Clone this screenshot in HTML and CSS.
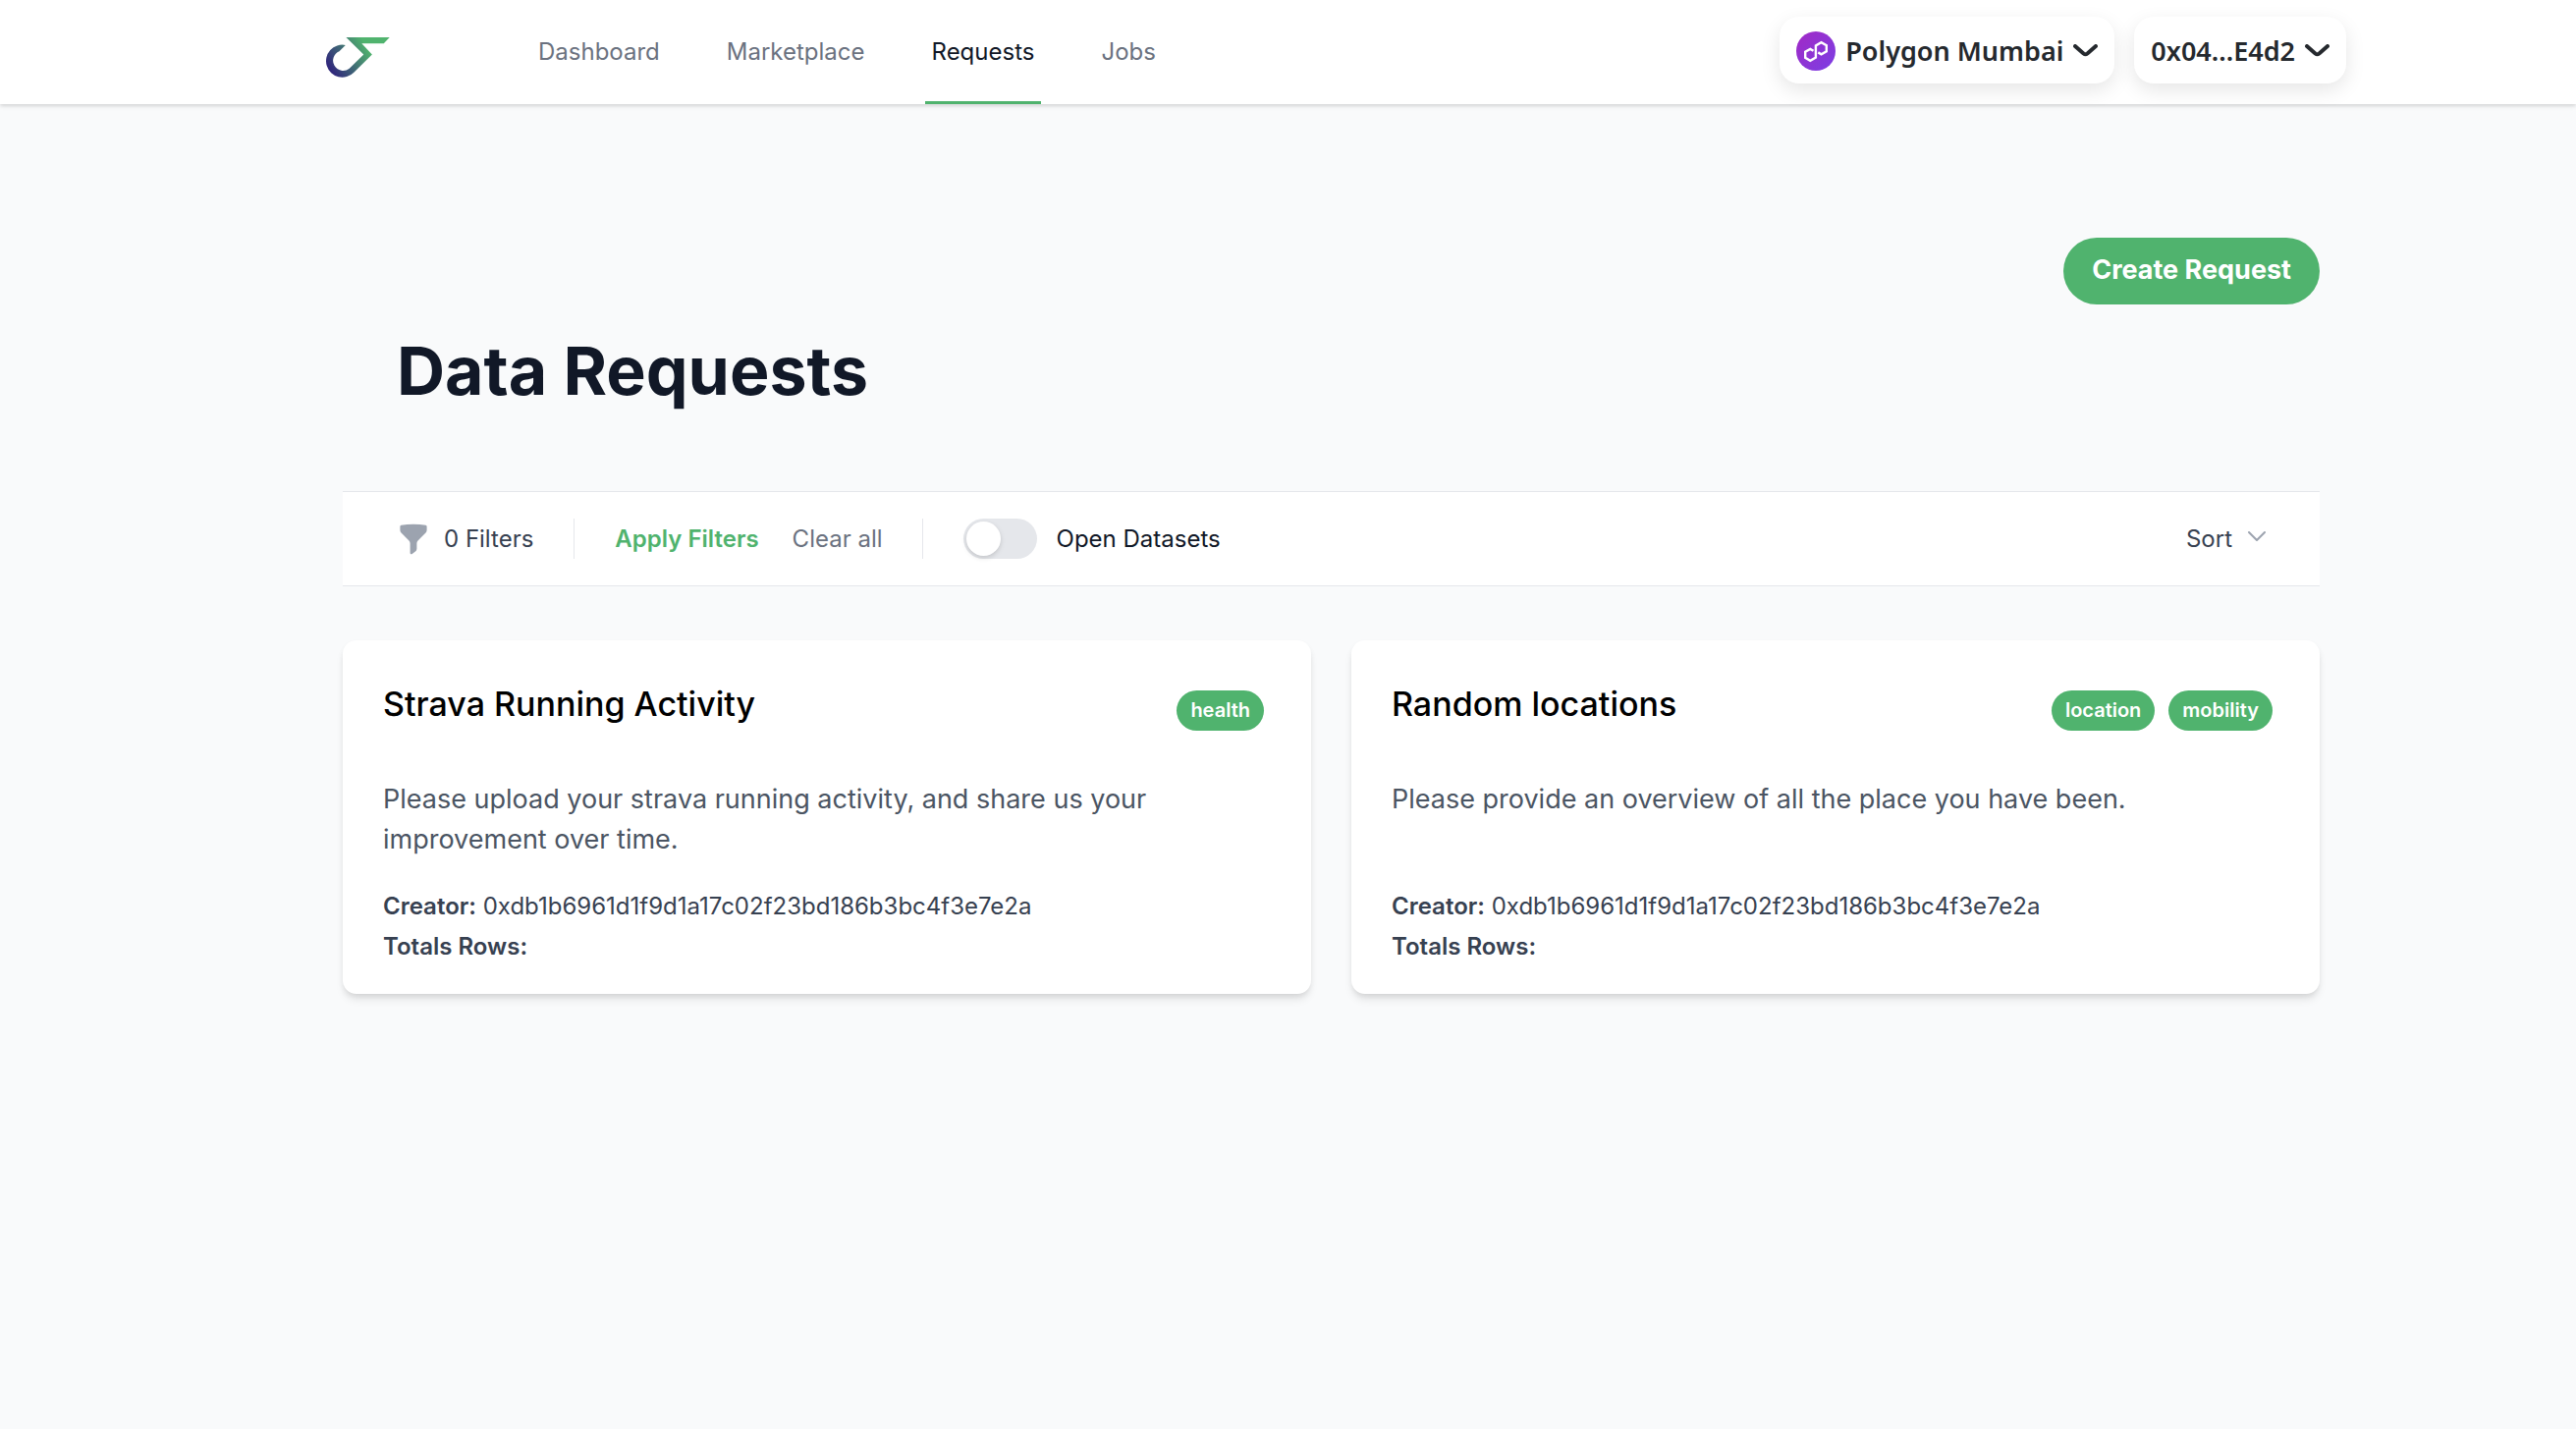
FILE: index.html
```html
<!DOCTYPE html>
<html lang="en">
<head>
  <meta charset="UTF-8">
  <meta name="viewport" content="width=device-width, initial-scale=1">
  <title>Data Requests</title>
  <link rel="stylesheet" href="styles.css">
</head>
<body>
  <header class="header">
    <div class="header-inner">
      <a class="logo" href="#" aria-label="Home">
        <svg viewBox="66 54 195 124" width="65" height="41">
          <defs>
            <linearGradient id="logo-fill" gradientUnits="userSpaceOnUse" x1="80" y1="150" x2="190" y2="80">
              <stop offset="0" stop-color="#312a7c"/>
              <stop offset="1" stop-color="#50b36e"/>
            </linearGradient>
          </defs>
          <path fill="url(#logo-fill)" d="M127 54H261L243 73H175L207 107L151 162A50 50 0 1 1 125 78L106 97A31 31 0 1 0 137 150L181 107Z"/>
        </svg>
      </a>
      <nav class="nav">
        <a href="#">Dashboard</a>
        <a href="#">Marketplace</a>
        <a href="#" class="active">Requests</a>
        <a href="#">Jobs</a>
      </nav>
      <div class="wallet">
        <button class="wallet-button" type="button">
          <svg viewBox="0 0 40 40" width="40" height="40">
            <defs>
              <linearGradient id="polygon-fill" x1="0" y1="0" x2="1" y2="1">
                <stop offset="0" stop-color="#a229c5"/>
                <stop offset="1" stop-color="#7b3fe4"/>
              </linearGradient>
            </defs>
            <circle cx="20" cy="20" r="20" fill="url(#polygon-fill)"/>
            <path fill="none" stroke="#fff" stroke-width="2.4" d="M17.500 19.800L14.300 17.900L9.200 20.800V26.800L14.300 29.800L19.900 26.600V14.400L25.500 11.200L30.800 14.200V20.300L25.500 23.300L22.300 21.400"/>
          </svg>
          Polygon Mumbai
          <svg class="caret" viewBox="0 0 25 13" width="25" height="13"><path d="M2 2L10.500 9.500Q12.500 11 14.500 9.500L23 2"/></svg>
        </button>
        <button class="wallet-button" type="button">
          0x04...E4d2
          <svg class="caret" viewBox="0 0 25 13" width="25" height="13"><path d="M2 2L10.500 9.500Q12.500 11 14.500 9.500L23 2"/></svg>
        </button>
      </div>
    </div>
  </header>

  <main class="page">
    <div class="page-actions">
      <button class="create-button" type="button">Create Request</button>
    </div>
    <h1>Data Requests</h1>

    <!-- Filters -->
    <section class="filters" aria-label="Filters">
      <button class="filter-count" type="button">
        <svg viewBox="0 0 20 20" width="34" height="34"><path fill="#9ca3af" fill-rule="evenodd" d="M2.628 1.601C5.028 1.206 7.490 1 10 1s4.973.206 7.372.601a.75.75 0 01.628.740v2.288a2.250 2.250 0 01-.659 1.590l-4.682 4.683a2.250 2.250 0 00-.659 1.590v3.037c0 .684-.310 1.330-.844 1.757l-1.937 1.550A.75.75 0 018 18.250v-5.757a2.250 2.250 0 00-.659-1.591L2.659 6.220A2.250 2.250 0 012 4.629V2.340a.75.75 0 01.628-.740z"/></svg>
        0 Filters
      </button>
      <div class="filter-group">
        <button class="apply" type="button">Apply Filters</button>
        <button class="clear" type="button">Clear all</button>
      </div>
      <div class="filter-group">
        <label class="switch"><input type="checkbox" role="switch">Open Datasets</label>
      </div>
      <button class="sort" type="button">
        Sort
        <svg viewBox="0 0 18 11" width="18" height="11"><path d="M1 1L9 9L17 1"/></svg>
      </button>
    </section>

    <!-- Requests -->
    <section class="cards" aria-label="Requests">
      <article class="card">
        <div class="card-head">
          <h2>Strava Running Activity</h2>
          <div class="tags"><span class="tag">health</span></div>
        </div>
        <p class="description">Please upload your strava running activity, and share us your improvement over time.</p>
        <p class="meta"><b>Creator:</b> 0xdb1b6961d1f9d1a17c02f23bd186b3bc4f3e7e2a</p>
        <p class="meta"><b>Totals Rows:</b></p>
      </article>
      <article class="card">
        <div class="card-head">
          <h2>Random locations</h2>
          <div class="tags"><span class="tag">location</span><span class="tag">mobility</span></div>
        </div>
        <p class="description">Please provide an overview of all the place you have been.</p>
        <p class="meta"><b>Creator:</b> 0xdb1b6961d1f9d1a17c02f23bd186b3bc4f3e7e2a</p>
        <p class="meta"><b>Totals Rows:</b></p>
      </article>
    </section>
  </main>
</body>
</html>
```
FILE: styles.css
```css
* {
  box-sizing: border-box;
}

body {
  margin: 0;
  background: #f9fafb;
  color: #111827;
  font-family: Inter, "Liberation Sans", sans-serif;
  font-size: 24px;
  line-height: 34px;
}

h1, h2, p {
  margin: 0;
}

a {
  color: inherit;
  text-decoration: none;
}

button {
  padding: 0;
  border: 0;
  background: none;
  color: inherit;
  font: inherit;
  cursor: pointer;
}

svg {
  display: block;
  flex: none;
}

.header {
  background: #fff;
  box-shadow: 0 2px 5px rgba(0, 0, 0, 0.1), 0 2px 3px rgba(0, 0, 0, 0.06);
}

.header-inner {
  display: flex;
  max-width: 2177px;
  height: 106px;
  margin: 0 auto;
  padding: 0 11px 0 109px;
}

.logo {
  margin: 38px 144px 0 0;
}

.nav {
  display: flex;
  gap: 54px;
}

.nav a {
  display: flex;
  align-items: center;
  padding: 3px 7px 0;
  border-bottom: 3px solid transparent;
  color: #6b7280;
}

.nav .active {
  border-color: #50b36e;
  color: #111827;
}

.wallet {
  display: flex;
  align-items: center;
  gap: 20px;
  margin-left: auto;
  padding-bottom: 4px;
}

.wallet-button {
  display: flex;
  align-items: center;
  gap: 10px;
  height: 68px;
  padding: 1px 17px 0;
  border-radius: 20px;
  background: #fff;
  box-shadow: 0 7px 20px rgba(0, 0, 0, 0.1);
  color: #25292e;
  font-family: "Noto Sans", sans-serif;
  font-size: 27px;
  font-weight: 600;
}

.caret {
  fill: none;
  stroke: currentColor;
  stroke-width: 4;
  stroke-linecap: round;
}

.page {
  max-width: 2177px;
  margin: 0 auto;
  padding: 136px 38px 68px 126px;
}

.page-actions {
  display: flex;
  justify-content: flex-end;
}

.create-button {
  height: 68px;
  padding: 0 29px 2px;
  border-radius: 34px;
  background: #50b36e;
  color: #fff;
  font-size: 27px;
  font-weight: 700;
}

h1 {
  padding: 33px 55px 89px;
  font-size: 68px;
  font-weight: 700;
  line-height: 68px;
}

.filters {
  display: flex;
  align-items: center;
  height: 97px;
  padding: 0 55px;
  border-top: 1px solid #e5e7eb;
  border-bottom: 1px solid #e5e7eb;
  background: #fff;
}

.filter-count {
  display: flex;
  align-items: center;
  gap: 14px;
  padding-right: 41px;
  color: #374151;
}

.filter-group {
  display: flex;
  align-items: center;
  gap: 34px;
  height: 41px;
  padding: 0 40px 0 41px;
  border-left: 1px solid #e5e7eb;
}

.apply {
  color: #50b36e;
  font-weight: 600;
}

.clear {
  color: #6b7280;
}

.switch {
  display: flex;
  align-items: center;
  gap: 20px;
}

.switch input {
  display: flex;
  appearance: none;
  width: 75px;
  height: 41px;
  margin: 0;
  padding: 3px;
  border-radius: 21px;
  background: #e5e7eb;
}

.switch input::before {
  content: "";
  width: 35px;
  height: 35px;
  border-radius: 50%;
  background: #fff;
  box-shadow: 0 2px 5px rgba(0, 0, 0, 0.15);
}

.switch input:checked {
  justify-content: flex-end;
  background: #50b36e;
}

.sort {
  display: flex;
  align-items: center;
  gap: 16px;
  margin-left: auto;
  color: #374151;
}

.sort svg {
  margin-bottom: 4px;
  fill: none;
  stroke: #9ca3af;
  stroke-width: 2;
  stroke-linecap: round;
  stroke-linejoin: round;
}

.cards {
  display: grid;
  grid-template-columns: 1fr 1fr;
  gap: 41px;
  margin-top: 55px;
}

.card {
  display: flex;
  flex-direction: column;
  padding: 41px 48px 28px 41px;
  border-radius: 14px;
  background: #fff;
  box-shadow: 0 7px 10px -2px rgba(0, 0, 0, 0.1), 0 3px 7px -2px rgba(0, 0, 0, 0.1);
}

.card-head {
  display: flex;
  justify-content: space-between;
  align-items: flex-start;
  margin-bottom: 49px;
}

h2 {
  color: #000;
  font-size: 34px;
  font-weight: 500;
  line-height: 48px;
}

.tags {
  display: flex;
  gap: 14px;
  padding-top: 10px;
}

.tag {
  height: 41px;
  padding: 0 14px;
  border-radius: 21px;
  background: #50b36e;
  color: #fff;
  font-size: 20px;
  font-weight: 600;
  line-height: 41px;
}

.description {
  flex: 1;
  margin-bottom: 27px;
  color: #4b5563;
  font-size: 27px;
  line-height: 41px;
}

.meta {
  color: #374151;
  line-height: 41px;
}

.meta b {
  font-weight: 600;
}
```
